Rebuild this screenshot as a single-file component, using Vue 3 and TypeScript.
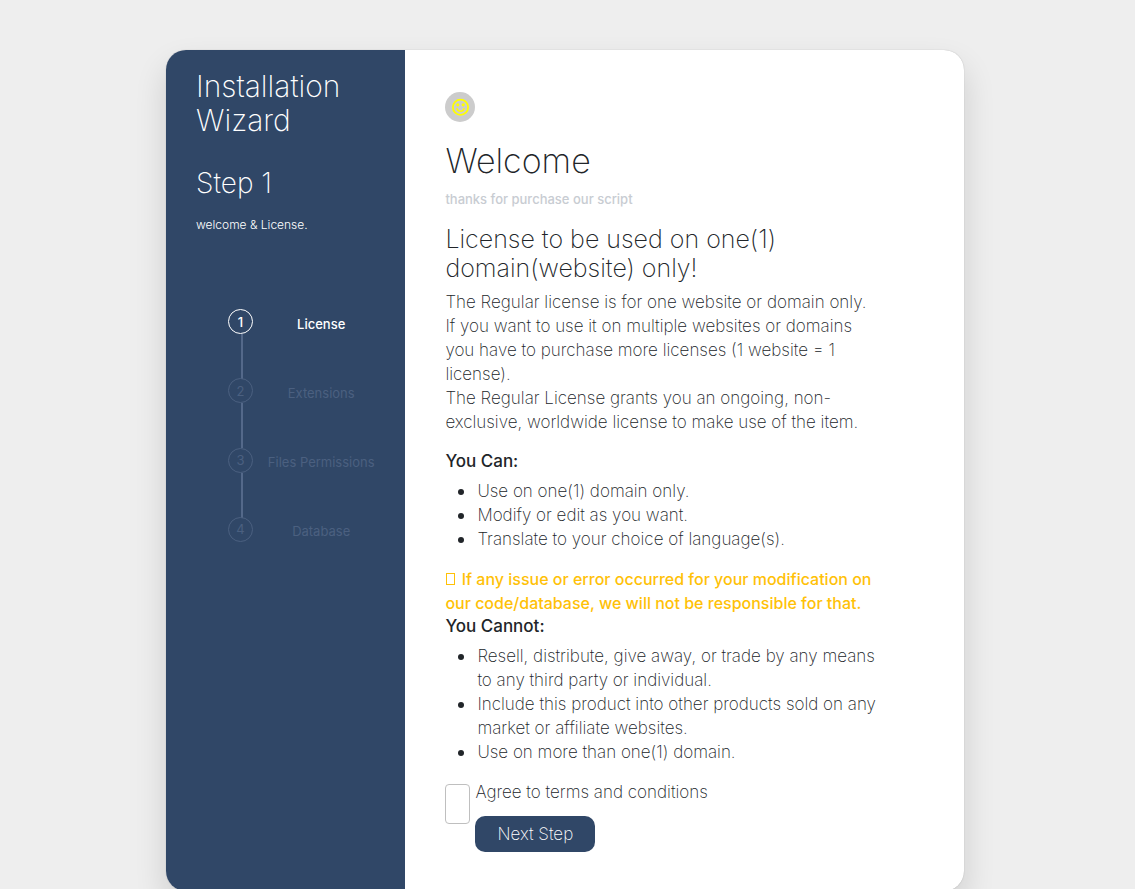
<script setup lang="ts">
import { ref } from 'vue'

const steps: string[] = ['License', 'Extensions', 'Files Permissions', 'Database']
const current = ref(0)
const agreed = ref(false)

const allowed: string[] = [
  'Use on one(1) domain only.',
  'Modify or edit as you want.',
  'Translate to your choice of language(s).',
]
const forbidden: string[][] = [
  ['Resell, distribute, give away, or trade by any means', 'to any third party or individual.'],
  ['Include this product into other products sold on any', 'market or affiliate websites.'],
  ['Use on more than one(1) domain.'],
]
</script>

<template>
  <main class="page">
    <div class="card">
      <aside class="side">
        <h1 class="side-title">Installation<br />Wizard</h1>
        <h2 class="side-step">Step {{ current + 1 }}</h2>
        <p class="side-note">welcome &amp; License.</p>
        <ol class="steps">
          <li v-for="(step, i) in steps" :key="step" class="step" :class="{ active: i === current }">
            <span class="dot">{{ i + 1 }}</span>
            <span class="step-name">{{ step }}</span>
          </li>
        </ol>
      </aside>

      <form class="content" @submit.prevent>
        <div class="badge">
          <svg viewBox="0 0 18 18" width="18" height="18" aria-hidden="true">
            <circle cx="9.5" cy="9.3" r="7.6" fill="none" stroke="#ff0" stroke-width="1.8" />
            <circle cx="6.8" cy="6.8" r="1.6" fill="#ff0" />
            <circle cx="12.2" cy="6.8" r="1.6" fill="#ff0" />
            <path d="M6 10.6Q6.8 13.3 9.5 13.3T13 10.6" fill="none" stroke="#ff0" stroke-width="1.5" stroke-linecap="round" />
          </svg>
        </div>
        <h2 class="welcome">Welcome</h2>
        <p class="thanks">thanks for purchase our script</p>
        <h3 class="license">License to be used on one(1)<br />domain(website) only!</h3>
        <p class="text">
          The Regular license is for one website or domain only.<br />
          If you want to use it on multiple websites or domains<br />
          you have to purchase more licenses (1 website = 1<br />
          license).<br />
          The Regular License grants you an ongoing, non-<br />
          exclusive, worldwide license to make use of the item.
        </p>
        <h4 class="sub can">You Can:</h4>
        <ul class="list">
          <li v-for="item in allowed" :key="item">{{ item }}</li>
        </ul>
        <p class="warning">
          <span class="box"></span> If any issue or error occurred for your modification on<br />
          our code/database, we will not be responsible for that.
        </p>
        <h4 class="sub">You Cannot:</h4>
        <ul class="list">
          <li v-for="item in forbidden" :key="item[0]">
            <template v-for="(line, i) in item" :key="line"><br v-if="i > 0" />{{ line }}</template>
          </li>
        </ul>
        <div class="agree">
          <input id="agree" v-model="agreed" class="check" type="checkbox" />
          <div class="agree-body">
            <label for="agree">Agree to terms and conditions</label>
            <button class="next" type="submit">Next Step</button>
          </div>
        </div>
      </form>
    </div>
  </main>
</template>

<style>
html,
body {
  background: #eee;
}
</style>

<style scoped>
* {
  box-sizing: border-box;
}
.page {
  padding: 50px 5px 50px 0;
  background: #eee;
  color: #212529;
  font-family: Inter, "Open Sans", sans-serif;
  font-size: 17px;
  font-weight: 200;
  line-height: 24px;
}
h1,
h2,
h3,
h4,
p,
ul,
ol {
  margin: 0;
  padding: 0;
  font-weight: 200;
}
.card {
  display: flex;
  max-width: 798px;
  margin: 0 auto;
  border-radius: 20px;
  background: #fff;
  box-shadow: 0 0 1px rgba(0, 0, 0, 0.3), 0 16px 32px rgba(0, 0, 0, 0.14);
  overflow: hidden;
}
.side {
  flex: 0 0 30%;
  padding: 19px 16px 20px 30px;
  background: #304767;
  color: #fff;
}
.side-title,
.side-step {
  font-size: 28px;
  line-height: 34px;
}
.side-title {
  font-size: 30px;
}
.side-step {
  margin-top: 29px;
}
.side-note {
  margin-top: 13px;
  font-size: 12px;
  font-weight: 300;
}
.steps {
  display: flex;
  flex-direction: column;
  justify-content: space-between;
  height: 233px;
  margin: 72px 0 0 32px;
  list-style: none;
  color: #4b6080;
  font-size: 13px;
  font-weight: 400;
}
.step {
  display: flex;
  align-items: center;
  position: relative;
  height: 25px;
}
.step:not(:last-child)::after {
  content: "";
  position: absolute;
  top: 25px;
  left: 13px;
  width: 2px;
  height: 45px;
  background: #54698a;
}
.dot {
  display: flex;
  align-items: center;
  justify-content: center;
  flex: 0 0 25px;
  height: 25px;
  border: 1px solid #4b6080;
  border-radius: 50%;
}
.step-name {
  flex: 1;
  padding-top: 4px;
  text-align: center;
  white-space: nowrap;
}
.active {
  color: #fff;
  font-weight: 500;
}
.active .dot {
  border-color: #fff;
}
.content {
  flex: 1;
  padding: 42px 40px 39px;
}
.badge {
  display: flex;
  align-items: center;
  justify-content: center;
  width: 30px;
  height: 30px;
  border-radius: 50%;
  background: #ccc;
}
.welcome {
  margin-top: 20px;
  font-size: 34px;
  line-height: 38px;
}
.thanks {
  margin-top: 7px;
  color: #c8ccd2;
  font-size: 13px;
  font-weight: 500;
}
.license {
  margin-top: 14px;
  font-size: 25px;
  line-height: 29px;
}
.text {
  margin-top: 7px;
  white-space: nowrap;
}
.sub {
  font-weight: 500;
  line-height: 22px;
}
.can {
  margin-top: 16px;
}
.list {
  margin: 7px 0 16px;
  padding-left: 32px;
  list-style: none;
  white-space: nowrap;
}
.list li {
  position: relative;
}
.list li::before {
  content: "";
  position: absolute;
  top: 10px;
  left: -19px;
  width: 6px;
  height: 6px;
  border-radius: 50%;
  background: #212529;
}
.warning {
  color: #ffc107;
  font-size: 16px;
  font-weight: 500;
  white-space: nowrap;
}
.box {
  display: inline-block;
  width: 9px;
  height: 12px;
  margin: 0 2px 0 1px;
  border: 1px solid #ffc107;
}
.agree {
  display: flex;
  gap: 5px;
}
.check {
  appearance: none;
  width: 25px;
  height: 40px;
  margin: 4px 0 0;
  border: 1px solid #bfbfbf;
  border-radius: 4px;
  background: #fff;
}
.check:checked {
  background: #304767;
}
.agree-body {
  display: flex;
  flex-direction: column;
  align-items: flex-start;
  gap: 12px;
}
.next {
  width: 120px;
  height: 36px;
  padding: 0;
  border: 0;
  border-radius: 10px;
  background: #304767;
  color: #fff;
  font: inherit;
  cursor: pointer;
}
</style>
